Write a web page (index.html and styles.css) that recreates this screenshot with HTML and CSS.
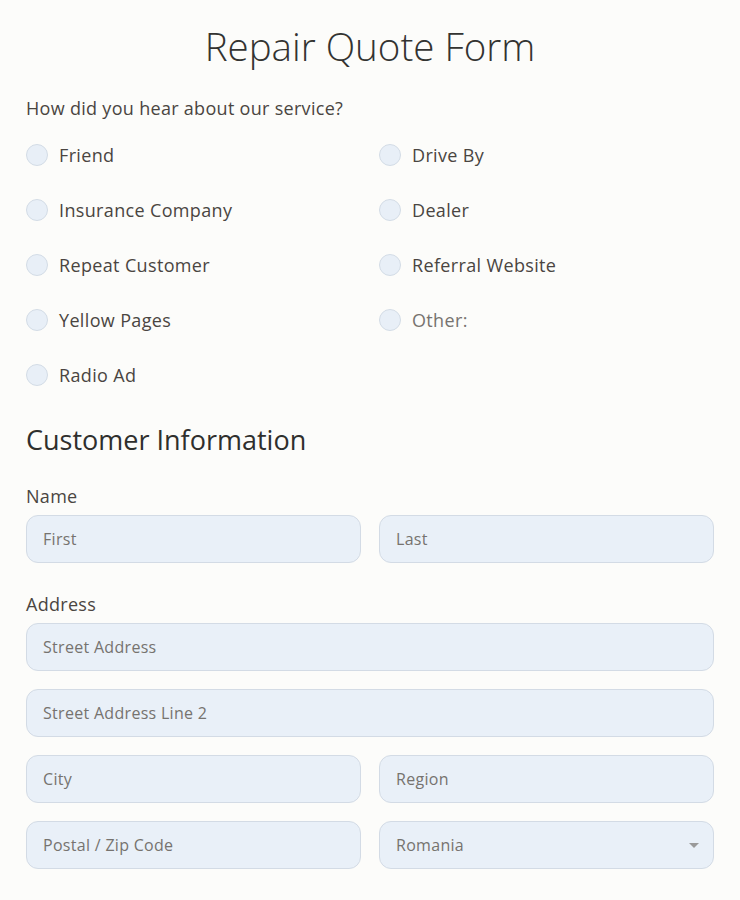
FILE: index.html
```html
<!DOCTYPE html>
<html lang="en">
<head>
<meta charset="utf-8">
<title>Repair Quote Form</title>
<link rel="stylesheet" href="styles.css">
</head>
<body>
<form class="form">
  <h1 class="title">Repair Quote Form</h1>

  <div class="question">How did you hear about our service?</div>
  <div class="radios">
    <label class="radio"><span class="dot"></span><span>Friend</span></label>
    <label class="radio"><span class="dot"></span><span>Drive By</span></label>
    <label class="radio"><span class="dot"></span><span>Insurance Company</span></label>
    <label class="radio"><span class="dot"></span><span>Dealer</span></label>
    <label class="radio"><span class="dot"></span><span>Repeat Customer</span></label>
    <label class="radio"><span class="dot"></span><span>Referral Website</span></label>
    <label class="radio"><span class="dot"></span><span>Yellow Pages</span></label>
    <label class="radio other"><span class="dot"></span><span>Other:</span></label>
    <label class="radio"><span class="dot"></span><span>Radio Ad</span></label>
  </div>

  <h2 class="section">Customer Information</h2>

  <div class="field-label">Name</div>
  <div class="row">
    <div class="input">First</div>
    <div class="input">Last</div>
  </div>

  <div class="field-label address">Address</div>
  <div class="stack">
    <div class="input">Street Address</div>
    <div class="input">Street Address Line 2</div>
    <div class="row">
      <div class="input">City</div>
      <div class="input">Region</div>
    </div>
    <div class="row">
      <div class="input">Postal / Zip Code</div>
      <div class="input select">Romania<span class="caret"></span></div>
    </div>
  </div>
</form>
</body>
</html>
```

FILE: styles.css
```css
* { box-sizing: border-box; }
html, body { margin: 0; padding: 0; background: #fcfcfa; }
body {
  font-family: "Open Sans", "Lato", sans-serif;
  color: #4a4541;
}
.form { padding: 0 26px; }
.title {
  margin: 24px 0 0;
  font-size: 38.5px;
  line-height: 44px;
  font-weight: 300;
  text-align: center;
  color: #333331;
}
.question {
  margin-top: 28px;
  font-size: 18px;
  line-height: 24px;
  letter-spacing: 0.3px;
}
.radios {
  margin-top: 24px;
  display: grid;
  grid-template-columns: 1fr 1fr;
  column-gap: 18px;
  row-gap: 33px;
}
.radio {
  display: flex;
  align-items: center;
  gap: 11px;
  height: 22px;
  font-size: 18px;
  letter-spacing: 0.35px;
}
.dot {
  width: 22px;
  height: 22px;
  border-radius: 50%;
  background: #e8eff7;
  border: 1px solid #d3dce6;
  flex: none;
}
.radio.other { color: #77736f; }
.section {
  margin: 36px 0 0;
  font-size: 27px;
  line-height: 36px;
  font-weight: 400;
  color: #2f2f2d;
}
.field-label {
  margin-top: 26px;
  font-size: 18px;
  line-height: 24px;
  margin-bottom: 7px;
  letter-spacing: 0.3px;
}
.field-label.address { margin-top: 29px; }
.row {
  display: grid;
  grid-template-columns: 1fr 1fr;
  column-gap: 18px;
}
.stack {
  display: flex;
  flex-direction: column;
  gap: 18px;
}
.input {
  height: 48px;
  border-radius: 12px;
  background: #e9f0f8;
  border: 1px solid #d3dbe5;
  padding: 0 16px;
  display: flex;
  align-items: center;
  font-size: 16px;
  letter-spacing: 0.3px;
  color: #76736f;
}
.select { justify-content: space-between; }
.caret {
  width: 0;
  height: 0;
  border-left: 5px solid transparent;
  border-right: 5px solid transparent;
  border-top: 5px solid #9a9a9a;
  margin-right: -2px;
}
```
